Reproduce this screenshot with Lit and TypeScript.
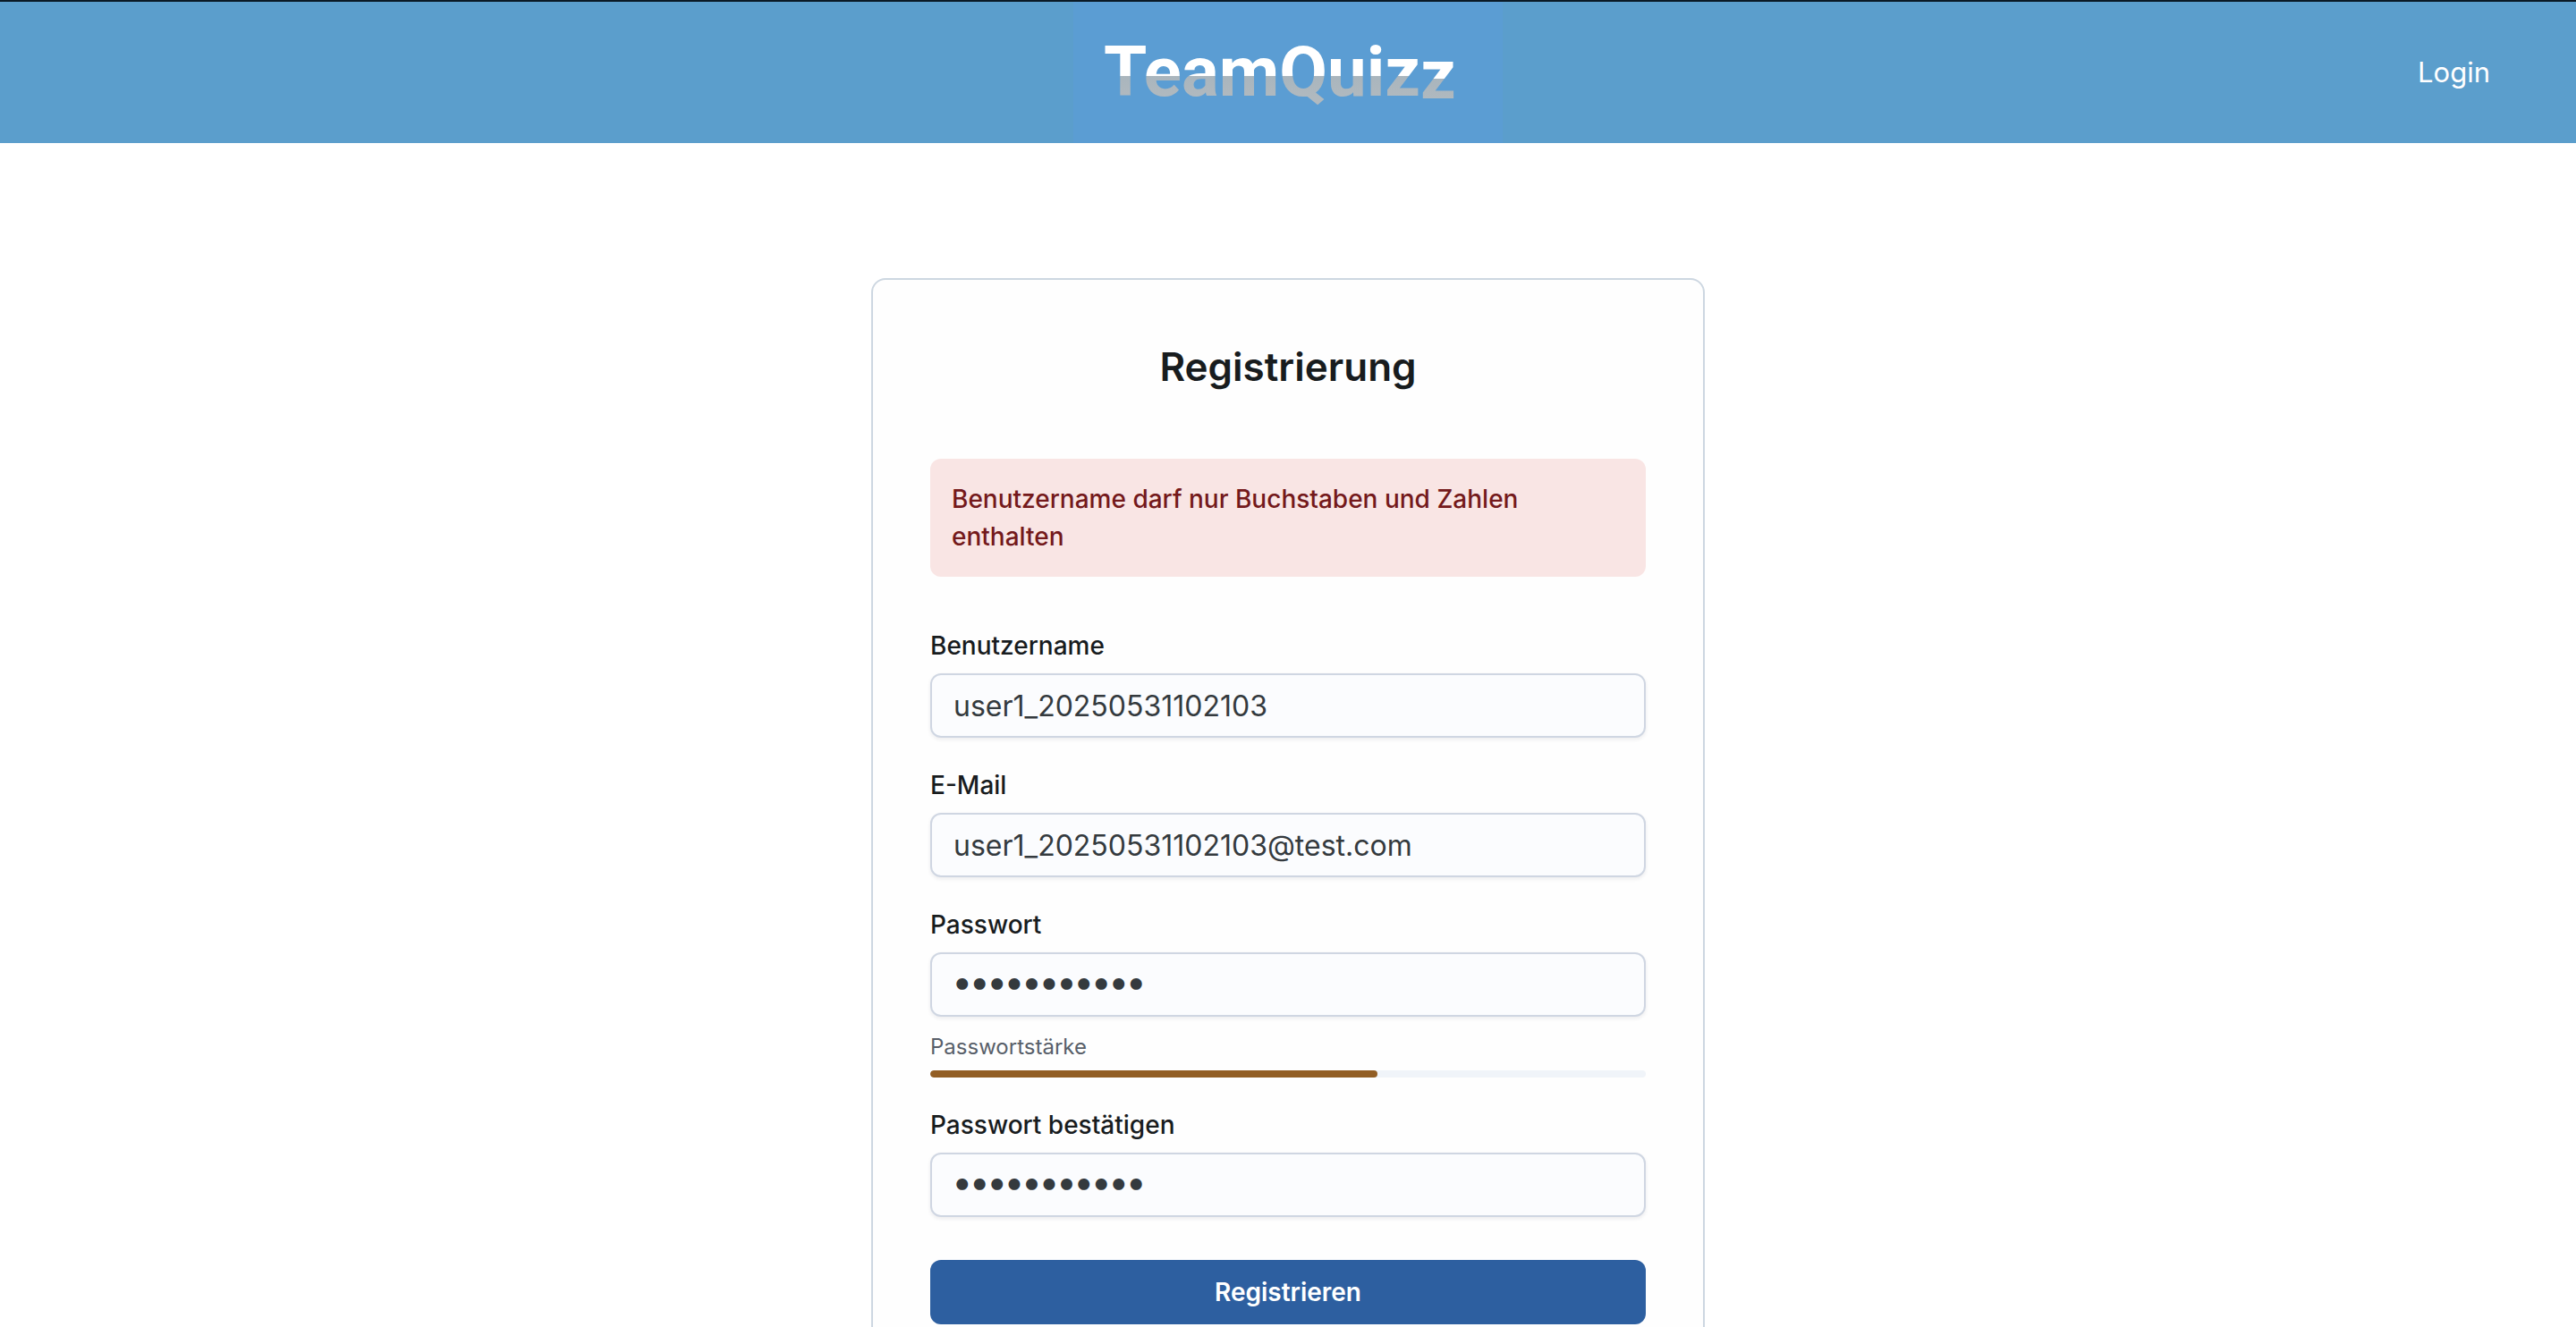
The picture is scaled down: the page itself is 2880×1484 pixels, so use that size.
import { LitElement, html, css } from "lit";
import { customElement, property, state } from "lit/decorators.js";

@customElement("team-logo")
class TeamLogo extends LitElement {
  static styles = css`
    :host {
      display: block;
      background: #5b9dd3;
    }
    svg {
      display: block;
      width: 480px;
      height: 158px;
    }
    .word {
      font-family: Roboto, "Liberation Sans", sans-serif;
      font-size: 78px;
      font-weight: 700;
    }
  `;

  render() {
    return html`
      <svg viewBox="0 0 480 158" role="img" aria-label="TeamQuizz">
        <defs>
          <linearGradient id="fade" gradientUnits="userSpaceOnUse" x1="0" y1="0" x2="0" y2="158">
            <stop offset="0.525" stop-color="#ffffff"></stop>
            <stop offset="0.525" stop-color="#a9b5bd"></stop>
            <stop offset="0.67" stop-color="#b0b9bf"></stop>
          </linearGradient>
          <linearGradient id="fade-low" gradientUnits="userSpaceOnUse" x1="0" y1="3" x2="0" y2="161">
            <stop offset="0.525" stop-color="#ffffff"></stop>
            <stop offset="0.525" stop-color="#a9b5bd"></stop>
            <stop offset="0.67" stop-color="#b0b9bf"></stop>
          </linearGradient>
        </defs>
        <text class="word" x="34" y="105" fill="url(#fade)">TeamQuiz<tspan dy="3" fill="url(#fade-low)">z</tspan></text>
      </svg>
    `;
  }
}

@customElement("form-field")
class FormField extends LitElement {
  @property() label = "";
  @property() type = "text";
  @property() value = "";
  @property() name = "";

  static styles = css`
    :host {
      display: flex;
      flex-direction: column;
      gap: 10px;
    }
    .label {
      font-size: 28px;
      line-height: 42px;
      font-weight: 500;
      color: #181c1e;
    }
    .input {
      box-sizing: border-box;
      width: 100%;
      height: 72px;
      margin: 0;
      padding: 0 24px;
      border: 2px solid #cfd6e2;
      border-radius: 12px;
      background: #fbfcfe;
      box-shadow: 0 2px 4px rgba(20, 30, 50, 0.08);
      color: #343a3e;
      font-family: inherit;
      font-size: 32px;
      outline: none;
    }
    .input[type="password"] {
      padding-bottom: 8px;
      font-size: 41px;
      font-weight: 700;
    }
    .input:focus {
      border-color: #2d5fa0;
    }
  `;

  render() {
    return html`
      <label class="label" for="control">${this.label}</label>
      <input
        class="input"
        id="control"
        name=${this.name}
        type=${this.type}
        .value=${this.value}
        autocomplete="off"
        @input=${(e: Event) => (this.value = (e.target as HTMLInputElement).value)}
      />
    `;
  }
}

@customElement("app-root")
class AppRoot extends LitElement {
  @state() private strength = 62.5;

  static styles = css`
    :host {
      display: block;
      height: 100vh;
      overflow-y: auto;
      scrollbar-width: none;
      background: #ffffff;
      font-family: Inter, "Liberation Sans", sans-serif;
    }
    .header {
      display: grid;
      grid-template-columns: 1fr auto 1fr;
      align-items: center;
      border-top: 2px solid #0b1a26;
      background: #5b9ecc;
    }
    .nav {
      grid-column: 3;
      justify-self: end;
      padding-right: 96px;
    }
    .logo {
      grid-column: 2;
    }
    .login {
      color: #ffffff;
      font-size: 31px;
      line-height: 48px;
      text-decoration: none;
    }
    .main {
      display: flex;
      justify-content: center;
      padding: 151px 32px;
    }
    .card {
      box-sizing: border-box;
      width: 100%;
      max-width: 932px;
      padding: 64px;
      border: 2px solid #cdd7e1;
      border-radius: 16px;
      background: #fefefe;
    }
    .title {
      margin: 0 0 70px;
      font-size: 44px;
      line-height: 66px;
      font-weight: 600;
      text-align: center;
      color: #181c1e;
    }
    .alert {
      margin-bottom: 56px;
      padding: 24px;
      border-radius: 12px;
      background: #f9e5e4;
      color: #74191b;
      font-size: 28px;
      line-height: 42px;
      font-weight: 500;
    }
    .fields {
      display: flex;
      flex-direction: column;
      gap: 32px;
    }
    .strength {
      display: flex;
      flex-direction: column;
      gap: 8px;
      margin-top: 16px;
    }
    .caption {
      font-size: 24px;
      line-height: 36px;
      color: #585f69;
    }
    .track {
      height: 8px;
      border-radius: 4px;
      background: #f0f4f9;
      overflow: hidden;
    }
    .bar {
      height: 100%;
      border-radius: 4px;
      background: #925e24;
    }
    .submit {
      width: 100%;
      height: 72px;
      margin-top: 48px;
      border: 0;
      border-radius: 12px;
      background: #2d5fa0;
      color: #ffffff;
      font-family: inherit;
      font-size: 28px;
      font-weight: 600;
      cursor: pointer;
    }
  `;

  render() {
    return html`
      <header class="header">
        <team-logo class="logo"></team-logo>
        <nav class="nav"><a class="login" href="#login">Login</a></nav>
      </header>
      <main class="main">
        <form class="card" @submit=${(e: Event) => e.preventDefault()}>
          <h1 class="title">Registrierung</h1>
          <div class="alert" role="alert">
            Benutzername darf nur Buchstaben und Zahlen enthalten
          </div>
          <div class="fields">
            <form-field label="Benutzername" name="username" value="user1_20250531102103"></form-field>
            <form-field label="E-Mail" name="email" type="email" value="user1_20250531102103@test.com"></form-field>
            <div>
              <form-field label="Passwort" name="password" type="password" value="Password12!"></form-field>
              <div class="strength">
                <span class="caption">Passwortstärke</span>
                <div class="track"><div class="bar" style="width:${this.strength}%"></div></div>
              </div>
            </div>
            <form-field label="Passwort bestätigen" name="confirm" type="password" value="Password12!"></form-field>
          </div>
          <button class="submit" type="submit">Registrieren</button>
        </form>
      </main>
    `;
  }
}
